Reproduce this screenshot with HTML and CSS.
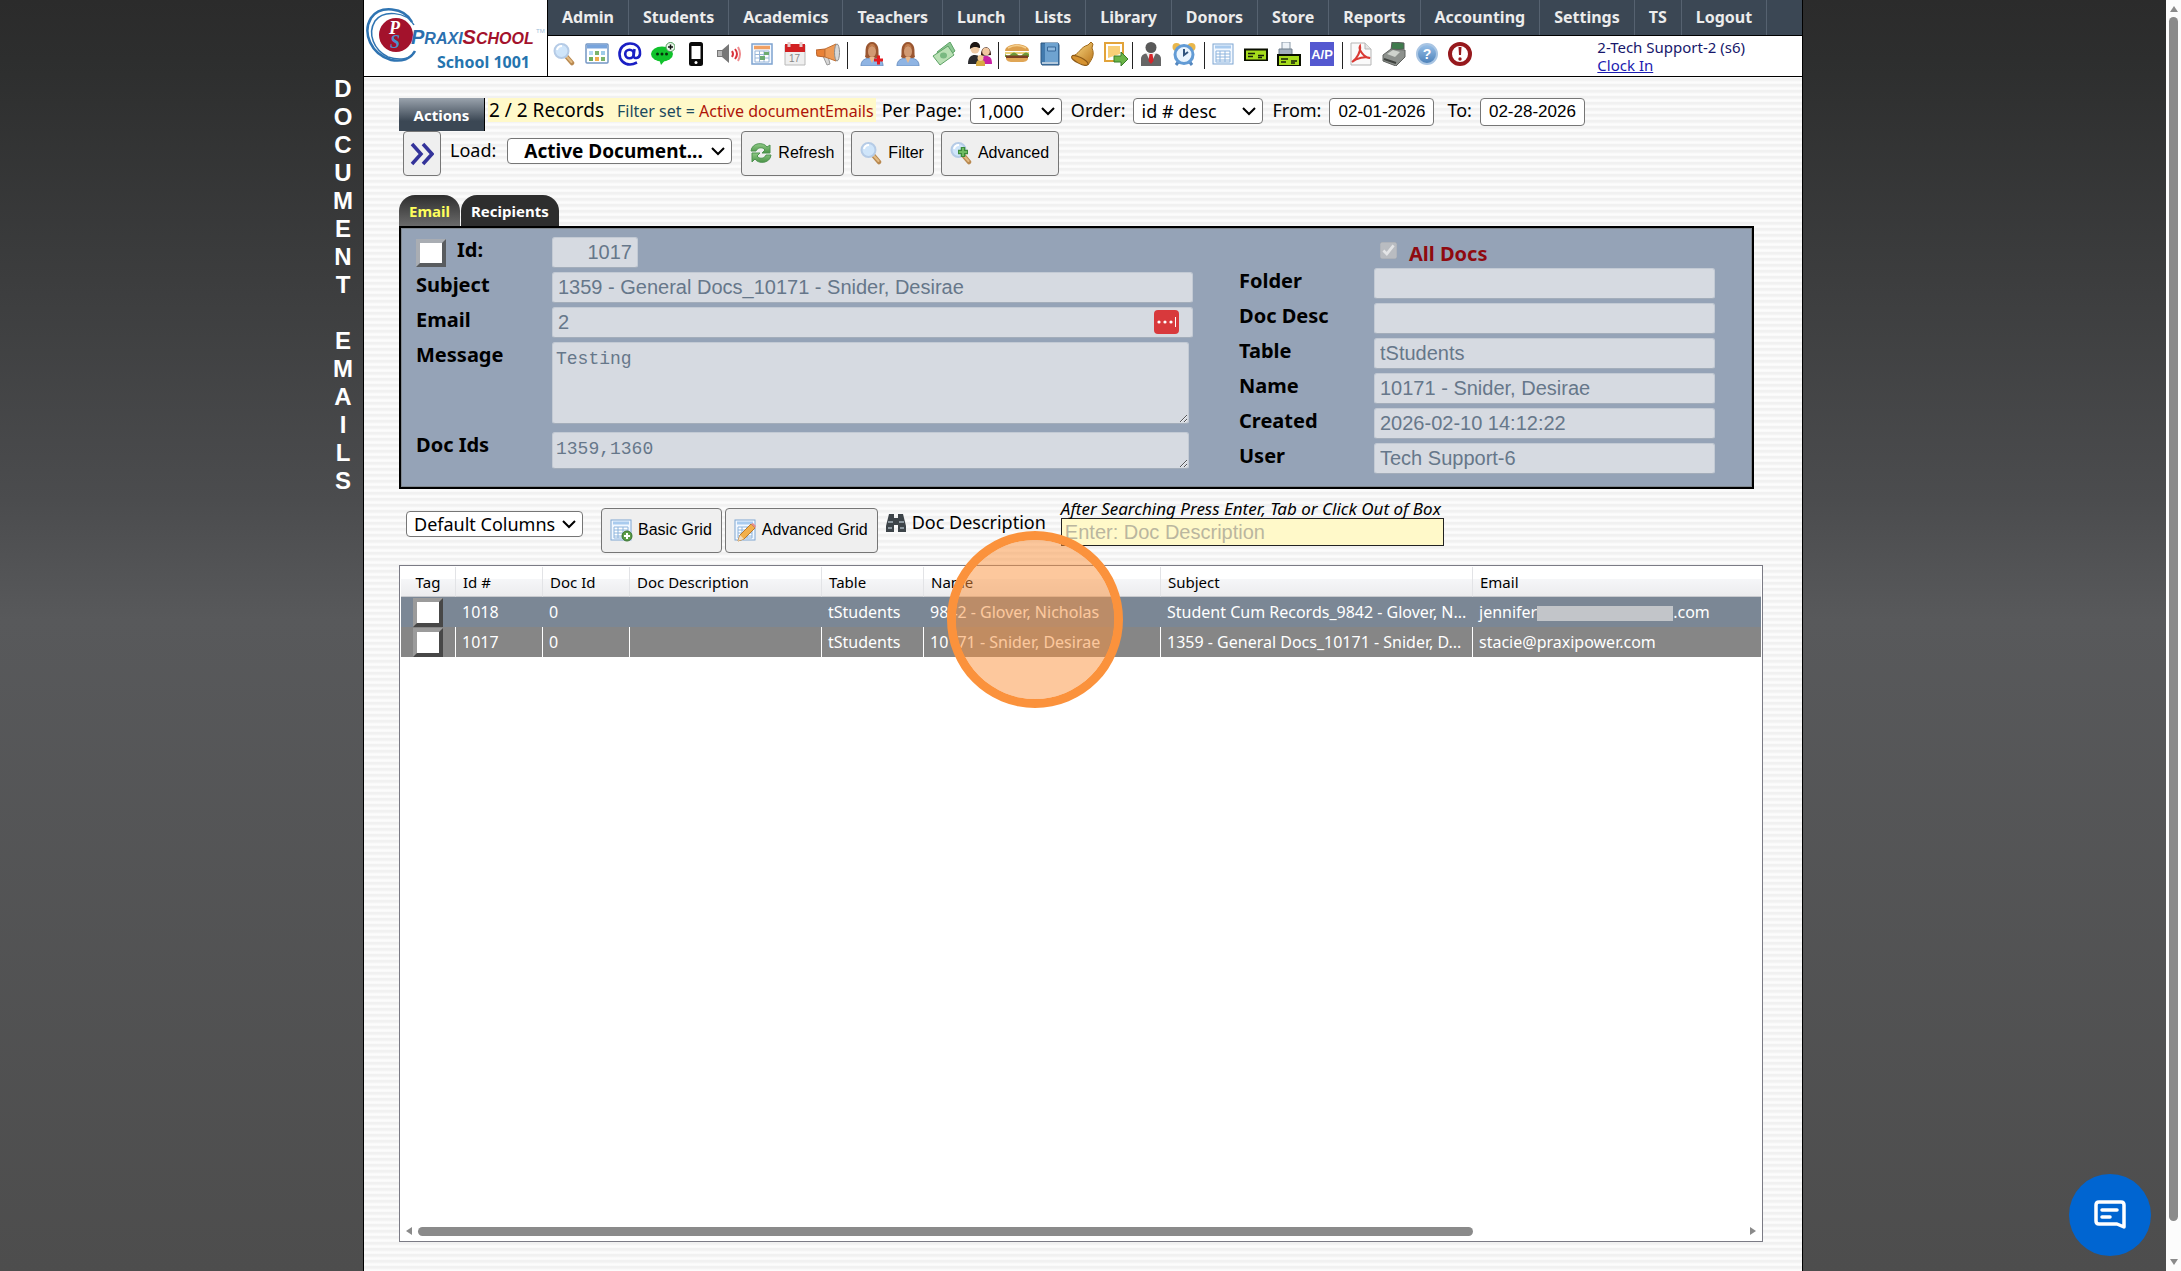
FILE: index.html
```html
<!DOCTYPE html>
<html lang="en">
<head>
<meta charset="utf-8">
<title>Document Emails - PraxiSchool</title>
<link rel="stylesheet" href="styles.css">
</head>
<body>
<svg class="defs" aria-hidden="true">
  <defs>
    <linearGradient id="gBlue" x1="0" y1="0" x2="0" y2="1"><stop offset="0" stop-color="#9cc3ea"/><stop offset="1" stop-color="#4a7fb8"/></linearGradient>
    <linearGradient id="gGold" x1="0" y1="0" x2="1" y2="1"><stop offset="0" stop-color="#ffe08a"/><stop offset="1" stop-color="#b9741a"/></linearGradient>
    <linearGradient id="gGreen" x1="0" y1="0" x2="0" y2="1"><stop offset="0" stop-color="#8fca86"/><stop offset="1" stop-color="#4b9447"/></linearGradient>
    <symbol id="mag" viewBox="0 0 24 24"><path d="M14 14l6 7" stroke="#b98950" stroke-width="4.500" stroke-linecap="round"/><path d="M15 15l4.500 5" stroke="#e3bb83" stroke-width="2" stroke-linecap="round"/><circle cx="9.500" cy="9" r="7" fill="#cfe5fa" stroke="#b5cbe6" stroke-width="2"/><path d="M5 8a5 5 0 0 1 5-4" stroke="#fff" stroke-width="2" fill="none"/></symbol>
    <symbol id="sheet" viewBox="0 0 24 24"><rect x="2" y="2" width="20" height="20" fill="#f2f8ff" stroke="#7ea6d2"/><path d="M4 5h16" stroke="#a9cbee" stroke-width="3"/><path d="M5 9h14v11H5zM5 12h14M5 15h14M5 18h14M9 9v11M14 9v11" fill="#fff" stroke="#8db4dd"/></symbol>
    <symbol id="woman" viewBox="0 0 24 24"><path d="M1 24c0-6 4-8 11-8s11 2 11 8z" fill="#8fb4e3" stroke="#6f94c4"/><path d="M9 15h6l-3 6z" fill="#e9b98d"/><path d="M5 15C6 12 5 9 6 5c1-3 3-5 6-5s5 2 6 5c1 4 0 7 1 10-3 2-4 1-5 0h-4c-1 1-2 2-5 0z" fill="#9a5630"/><ellipse cx="12" cy="9.500" rx="4" ry="5.500" fill="#d29a72"/><path d="M8 7c1-2 3-3 4-3s3 1 4 3c-1-4-2-5-4-5S9 3 8 7z" fill="#c27b4a"/></symbol>
    <symbol id="chequeIcon" viewBox="0 0 24 12"><rect x="1" y="1" width="22" height="11" fill="#a6dc1c" stroke="#0a0f00" stroke-width="2"/><path d="M4 5h7M4 8h5M14 7h6M14 9h4" stroke="#17220a" stroke-width="1.500"/></symbol>
  </defs>
</svg>

<div class="app">
  <aside class="side"><h1>D<br>O<br>C<br>U<br>M<br>E<br>N<br>T<br><br>E<br>M<br>A<br>I<br>L<br>S</h1></aside>

  <main class="page">
    <header class="header">
      <div class="brand">
        <svg class="logo" width="180" height="56" viewBox="0 0 180 56" role="img" aria-label="PraxiSchool">
          <g fill="none" stroke="#2f74b2"><path d="M46 14C38-1 14-3 5 10c-9 15 0 36 20 42 11 2 20-1 24-9" stroke-width="2.500"/><path d="M48 17C40 3 17 2 9 13c-8 13-1 29 13 36 12 4 22 2 26-5" stroke-width="1.500"/></g>
          <circle cx="30" cy="27" r="17" fill="#a3122c"/>
          <text x="23" y="26" class="mono-p">P</text><text x="24" y="40" class="mono-s">S</text>
          <text x="45" y="36" class="word"><tspan fill="#2b6fae" font-size="20">P</tspan><tspan fill="#2b6fae" font-size="16">RAXI</tspan><tspan fill="#a3122c" font-size="20">S</tspan><tspan fill="#a3122c" font-size="16">CHOOL</tspan></text>
          <text x="170" y="25" class="tm">TM</text>
        </svg>
        <span class="school">School 1001</span>
      </div>
      <div class="header-main">
        <nav class="nav">
          <a href="#">Admin</a><a href="#">Students</a><a href="#">Academics</a><a href="#">Teachers</a><a href="#">Lunch</a><a href="#">Lists</a><a href="#">Library</a><a href="#">Donors</a><a href="#">Store</a><a href="#">Reports</a><a href="#">Accounting</a><a href="#">Settings</a><a href="#">TS</a><a href="#">Logout</a>
        </nav>
        <div class="tools">
          <div class="group g1">
            <svg><use href="#mag"/></svg>
            <svg viewBox="0 0 24 24"><rect x="1" y="2" width="22" height="19" rx="1" fill="#fff" stroke="#7396c4" stroke-width="1.500"/><path d="M2 4.500h20" stroke="#78a4dc" stroke-width="4"/><path d="M4 9h4v4H4z" fill="#b5d8f5"/><path d="M10 9h4v4h-4zM16 15h4v4h-4z" fill="#7cb36b"/><path d="M16 9h4v4h-4z" fill="#9ecbe8"/><path d="M4 15h4v4H4z" fill="#6fae5c"/><path d="M10 15h4v4h-4z" fill="#f1ac4e"/></svg>
            <svg viewBox="0 0 24 24"><g fill="none" stroke="#1a1fc4" stroke-width="2.600"><circle cx="11.500" cy="12" r="4.300"/><path d="M16.500 7l-1 7c0 3 6 3 6.500-2C22.500 5 18 1.500 12 1.500S1.500 6 1.500 12 6 22.500 12 22.500c3 0 5-1 7-2"/></g></svg>
            <svg viewBox="0 0 24 24"><ellipse cx="11" cy="12" rx="11" ry="7.500" fill="#10c22b"/><path d="M8 17l2 6 6-7z" fill="#10c22b"/><g fill="#05300b"><circle cx="6.500" cy="12" r="1.500"/><circle cx="11" cy="12" r="1.500"/><circle cx="15.500" cy="12" r="1.500"/></g><circle cx="19.500" cy="5" r="4.500" fill="#e9f7ea" stroke="#4c9958"/><path d="M17 5h5M19.500 2.500v5" stroke="#111" stroke-width="1.500"/></svg>
            <svg viewBox="0 0 24 24"><rect x="5" y="0" width="14" height="24" rx="2.500" fill="#0a0a0a"/><path d="M7.500 4h9v13h-9z" fill="#fff"/><circle cx="12" cy="20.500" r="1.500" fill="#fff"/></svg>
            <svg viewBox="0 0 24 24"><path d="M0 8h5l7-6v19l-7-6H0z" fill="#777"/><path d="M1 9h4v5H1z" fill="#b5b5b5"/><g fill="none" stroke="#d9333c" stroke-width="2"><path d="M15 9q2 3 0 6" /><path d="M18 7q4 5 0 10"/><path d="M21 5q4 7 0 14" stroke="#ef8d90"/></g></svg>
            <svg viewBox="0 0 24 24"><rect x="2" y="2" width="20" height="20" fill="#f3f8ff" stroke="#7ea3cf" stroke-width="1.500"/><path d="M4 5.500h16" stroke="#f0a063" stroke-width="3.500"/><path d="M5 9h14v11H5zM5 12.500h14M5 16h14M9.500 9v11M14 9v11" fill="#fff" stroke="#9ab6d8"/><path d="M14 10h5v3h-5zM10 14h5v4h-5z" fill="#6dab72"/></svg>
            <svg viewBox="0 0 24 24"><path d="M2 3h20v20H2z" fill="#efefef" stroke="#b9b9b9"/><path d="M2 2h20v8H2z" fill="#d22022"/><path d="M6 0v5M18 0v5" stroke="#e7c9c9" stroke-width="3"/><text x="6" y="20" font-size="10" fill="#888" font-family="Liberation Sans, sans-serif">17</text></svg>
            <svg viewBox="0 0 24 24"><path d="M7 14l4 9 3-1-2-8z" fill="#d7d7d7" stroke="#999"/><path d="M0 8l9-1v8l-8-1z" fill="#e98136" stroke="#b8622a"/><path d="M9 7l11-5v17L9 15z" fill="#ee9a55" stroke="#c07034"/><ellipse cx="21" cy="10.500" rx="2.500" ry="8.500" fill="#d8d8d8" stroke="#8d8d8d"/></svg>
          </div>
          <div class="group g2">
            <svg viewBox="0 0 24 24"><use href="#woman"/><path d="M14 18h9M18.500 13.500v9" stroke="#e51a1f" stroke-width="3"/></svg>
            <svg><use href="#woman"/></svg>
            <svg viewBox="0 0 24 24"><g stroke="#5da266"><path d="M5 10L18 0l5 9-12 10z" fill="#8cc792"/><path d="M1 14L16 4l6 9L8 23z" fill="#b9e0b4"/></g><ellipse cx="11.500" cy="13.500" rx="3.500" ry="3" fill="#79b981"/></svg>
            <svg viewBox="0 0 24 24"><path d="M0 22c0-7 3-9 7-9s6 3 7 9z" fill="#2c2c2f"/><circle cx="7" cy="7" r="4.500" fill="#f0cba5"/><path d="M2 7c-1-9 11-9 10-1-4-1-6-2-10 1z" fill="#1d1613"/><path d="M12 22c0-6 2-8 6-8s6 2 6 8z" fill="#c822a3"/><path d="M13 14c-1-11 10-12 10-1z" fill="#3a1d14"/><circle cx="18" cy="9.500" r="3.800" fill="#f1c79f"/><path d="M8 24c0-5 1-6 5-6s4 2 4 6z" fill="#d7ab43"/><circle cx="12.500" cy="16" r="3" fill="#f3c993"/></svg>
          </div>
          <div class="group g3">
            <svg viewBox="0 0 24 24"><path d="M0 9c0-9 24-9 24 0z" fill="#dc9f4d"/><path d="M3 6q9-5 18 0" stroke="#f5cf8c" stroke-width="1.500" fill="none"/><path d="M0 10h24v2H0z" fill="#e9d27a"/><path d="M0 12q3 3 6 0t6 0 6 0 6 0v3H0z" fill="#6d9a37"/><path d="M1 13.500h22v3H1z" fill="#7a4022"/><path d="M1 16h22c0 3-3 4-6 4H7c-3 0-6-1-6-4z" fill="#e0a655"/></svg>
            <svg viewBox="0 0 24 24"><path d="M3 1h17l1 2v20H4l-1-2z" fill="#427aad" stroke="#2c5680"/><path d="M7 1h13v19H7z" fill="#6fa3d0"/><path d="M9.500 5h8v4h-8z" fill="#8fb9de" stroke="#39699a"/><path d="M4 21h16" stroke="#dce6ee" stroke-width="1.500"/></svg>
            <svg viewBox="0 0 24 24"><path d="M1 14C8 13 9 5 17 3l3-3 2 2-1 4c3 7 0 11-4 17C14 20 4 18 1 14z" fill="url(#gGold)" stroke="#a16a1a"/><ellipse cx="9" cy="18.500" rx="9" ry="3" transform="rotate(27 9 18)" fill="#d69331" stroke="#8d5a18"/></svg>
            <svg viewBox="0 0 24 24"><path d="M1 1h18v18H1z" fill="#fff" stroke="#e2a339" stroke-width="2"/><path d="M4 4h12v8L4 16z" fill="#f8cf77"/><path d="M10 14h7v-4l7 7-7 7v-4h-7z" fill="#6bb548" stroke="#387c28"/></svg>
          </div>
          <div class="group g4">
            <svg viewBox="0 0 24 24"><circle cx="12" cy="5.500" r="5.500" fill="#595959"/><path d="M2 24V17c0-4 3-6 10-6s10 2 10 6v7z" fill="#666"/><path d="M7 11l5 10 5-10z" fill="#eee"/><path d="M10.500 12h3l1 7-2.500 3-2.500-3z" fill="#d7252a"/></svg>
            <svg viewBox="0 0 24 24"><circle cx="4.500" cy="5" r="4" fill="#e9b74b"/><circle cx="19.500" cy="5" r="4" fill="#e9b74b"/><path d="M4 23l3-4M20 23l-3-4" stroke="#5587be" stroke-width="3"/><circle cx="12" cy="12.500" r="9" fill="#eaf4fd" stroke="#629bd5" stroke-width="3"/><path d="M12 7v6l4-3" fill="none" stroke="#33557d" stroke-width="2"/></svg>
          </div>
          <div class="group g5">
            <svg><use href="#sheet"/></svg>
            <svg viewBox="0 0 24 24"><use href="#chequeIcon" y="6" width="24" height="13"/></svg>
            <svg viewBox="0 0 24 24"><path d="M5 0h8v8H5z" fill="#eef3f8" stroke="#8a99a8"/><path d="M2 7h13v7H2z" fill="#a2b0bd" stroke="#6f7d8b"/><use href="#chequeIcon" y="12" width="24" height="12"/></svg>
            <svg viewBox="0 0 24 24"><path d="M0 0h24v24H0z" fill="#5458d0"/><text x="12" y="17" text-anchor="middle" font-size="13" font-weight="bold" fill="#fff" font-family="Liberation Sans, sans-serif">A/P</text></svg>
          </div>
          <div class="group g6">
            <svg viewBox="0 0 24 24"><path d="M2 1h14l6 6v16H2z" fill="#fafafa" stroke="#b5b5b5"/><path d="M16 1v6h6" fill="#e5e5e5" stroke="#b5b5b5"/><path d="M3 20C8 17 12 9 11 4c-2 3 4 12 10 12-5-2-13 0-18 4z" fill="none" stroke="#d93a34" stroke-width="2"/></svg>
            <svg viewBox="0 0 24 24"><path d="M10 0l12 1v6l-13 1z" fill="#3f7b4d" stroke="#5a5a5a"/><path d="M1 13L9 7l14 1v7l-9 9-13-5z" fill="#8d918d" stroke="#5f625f"/><path d="M5 12l6-4 7 2-5 5z" fill="#cfd3cd"/><path d="M2 17l12 4" stroke="#3e423e" stroke-width="2"/></svg>
            <svg viewBox="0 0 24 24"><circle cx="12" cy="12" r="10" fill="url(#gBlue)" stroke="#a9c5e3" stroke-width="2"/><text x="12" y="17" text-anchor="middle" font-size="14" font-weight="bold" fill="#fff" font-family="Liberation Sans, sans-serif">?</text></svg>
            <svg viewBox="0 0 24 24"><circle cx="12" cy="12" r="10" fill="#fff" stroke="#97191d" stroke-width="4"/><path d="M10.500 5h3l-.5 8h-2z" fill="#97191d"/><circle cx="12" cy="17" r="1.700" fill="#97191d"/></svg>
          </div>
          <div class="user"><span>2-Tech Support-2 (s6)</span><a href="#">Clock In</a></div>
        </div>
      </div>
    </header>

    <div class="content">
      <form class="bar top">
        <button type="button" class="actions">Actions</button>
        <p class="records">2 / 2 Records <small>Filter set = <em>Active documentEmails</em></small></p>
        <label>Per Page:<select class="s-page"><option>1,000</option></select></label>
        <label>Order:<select class="s-order"><option>id # desc</option></select></label>
        <label>From:<input class="date" type="text" value="02-01-2026"></label>
        <label class="to">To:<input class="date" type="text" value="02-28-2026"></label>
      </form>
      <div class="bar load">
        <button type="button" class="btn go" aria-label="Expand"><svg viewBox="0 0 24 24"><path d="M2 2l9 10-9 10M13 2l9 10-9 10" fill="none" stroke="#34339a" stroke-width="3.500"/></svg></button>
        <label>Load:<select class="s-load"><option>Active Document...</option></select></label>
        <button type="button" class="btn"><svg viewBox="0 0 24 24"><path d="M2 10c1-9 13-9 16-4l3-2v8h-8l3-3c-3-4-8-2-9 1z" fill="url(#gGreen)" stroke="#4f9351"/><path d="M22 14c-1 9-13 9-16 4l-3 3v-9h8l-3 3c3 4 8 2 9-1z" fill="url(#gGreen)" stroke="#4f9351"/></svg>Refresh</button>
        <button type="button" class="btn"><svg><use href="#mag"/></svg>Filter</button>
        <button type="button" class="btn"><svg viewBox="0 0 24 24"><use href="#mag"/><path d="M9 11h10M14 6v10" stroke="#3c8b3a" stroke-width="4.500"/><path d="M10 11h8M14 7v8" stroke="#6fbb62" stroke-width="2"/></svg>Advanced</button>
      </div>

      <div class="tabs"><button type="button" class="tab on">Email</button><button type="button" class="tab">Recipients</button></div>
      <section class="panel">
        <div class="fields left">
          <div class="lab"><input type="checkbox" class="bevel" id="idtick"><label for="idtick">Id:</label></div><input class="short" type="text" value="1017" aria-label="Id" disabled>
          <label for="subject">Subject</label><input id="subject" type="text" value="1359 - General Docs_10171 - Snider, Desirae" disabled>
          <label for="email">Email</label><div class="wrap"><input id="email" type="text" value="2" disabled><svg class="pass" viewBox="0 0 25 24"><rect width="25" height="24" rx="4" fill="#d8393c"/><circle cx="5" cy="12" r="1.600" fill="#fff"/><circle cx="11" cy="12" r="1.600" fill="#fff"/><circle cx="17" cy="12" r="1.600" fill="#fff"/><path d="M21.500 7v10" stroke="#fff"/></svg></div>
          <label for="message">Message</label><textarea id="message" class="tall" disabled>Testing</textarea>
          <label for="docids">Doc Ids</label><textarea id="docids" class="low" disabled>1359,1360</textarea>
        </div>
        <div class="fields right">
          <span></span><label class="all"><input type="checkbox" checked disabled>All Docs</label>
          <label for="folder">Folder</label><input id="folder" type="text" disabled>
          <label for="desc">Doc Desc</label><input id="desc" type="text" disabled>
          <label for="tbl">Table</label><input id="tbl" type="text" value="tStudents" disabled>
          <label for="name">Name</label><input id="name" type="text" value="10171 - Snider, Desirae" disabled>
          <label for="created">Created</label><input id="created" type="text" value="2026-02-10 14:12:22" disabled>
          <label for="user">User</label><input id="user" type="text" value="Tech Support-6" disabled>
        </div>
      </section>

      <div class="bar gridbar">
        <select class="s-cols" aria-label="Columns"><option>Default Columns</option></select>
        <button type="button" class="btn"><svg viewBox="0 0 24 24"><use href="#sheet"/><circle cx="18" cy="18" r="5" fill="#5b9d47" stroke="#3a7430"/><path d="M15 18h6M18 15v6" stroke="#fff" stroke-width="2"/></svg>Basic Grid</button>
        <button type="button" class="btn"><svg viewBox="0 0 24 24"><use href="#sheet"/><path d="M5 23l2-6L18 6l4 4-11 11z" fill="#f2b04c" stroke="#b9792a"/><path d="M5 23l2-6 4 4z" fill="#f3dcbc"/><path d="M18 6l4 4 1-2-3-3z" fill="#e58d8d"/></svg>Advanced Grid</button>
        <label class="find" for="docsearch"><svg viewBox="0 0 22 20"><path d="M4 1h5v4h4V1h5l2 8 1 4v6h-8v-7h-4v7H1v-6l1-4z" fill="#3d4449"/><path d="M3 9h5M14 9h5M3 15h4M15 15h4" stroke="#8b969e" stroke-width="2"/></svg>Doc Description</label>
        <div class="search"><i>After Searching Press Enter, Tab or Click Out of Box</i><input id="docsearch" type="text" placeholder="Enter: Doc Description"></div>
      </div>

      <section class="grid">
        <table>
          <colgroup><col class="c1"><col class="c2"><col class="c2"><col class="c4"><col class="c5"><col class="c6"><col class="c7"><col></colgroup>
          <thead><tr><th>Tag</th><th>Id #</th><th>Doc Id</th><th>Doc Description</th><th>Table</th><th>Name</th><th>Subject</th><th>Email</th></tr></thead>
          <tbody>
            <tr class="hot"><td><input type="checkbox" class="bevel" aria-label="Tag 1018"></td><td>1018</td><td>0</td><td></td><td>tStudents</td><td>9842 - Glover, Nicholas</td><td>Student Cum Records_9842 - Glover, N...</td><td>jennifer<span class="hidden"></span>.com</td></tr>
            <tr><td><input type="checkbox" class="bevel" aria-label="Tag 1017"></td><td>1017</td><td>0</td><td></td><td>tStudents</td><td>10171 - Snider, Desirae</td><td>1359 - General Docs_10171 - Snider, D...</td><td>stacie@praxipower.com</td></tr>
          </tbody>
        </table>
        <div class="hscroll"><svg viewBox="0 0 8 10"><path d="M7 1v8L1 5z"/></svg><span></span><svg viewBox="0 0 8 10"><path d="M1 1v8l6-4z"/></svg></div>
      </section>
    </div>
    <div class="pointer"></div>
  </main>
  <div></div>
</div>

<div class="vscroll"><svg viewBox="0 0 10 8"><path d="M1 7h8L5 1z"/></svg><span></span><svg viewBox="0 0 10 8"><path d="M1 1h8L5 7z"/></svg></div>

<button type="button" class="chat" aria-label="Chat"><svg viewBox="0 0 34 32" fill="none" stroke="#fff" stroke-width="3.500" stroke-linejoin="round" stroke-linecap="round"><path d="M6 3h22q3 0 3 3v22l-7-3H6q-3 0-3-3V6q0-3 3-3z"/><path d="M9 11h15M9 18h8"/></svg></button>
</body>
</html>
```
FILE: styles.css
```css
* { box-sizing: border-box; }

body {
  margin: 0;
  min-height: 100vh;
  display: flex;
  font-family: "Noto Sans", "Liberation Sans", sans-serif;
  font-size: 19px;
  color: #000;
  background: linear-gradient(#2b2b2b 0, #2d2e2e 60px, #4b4c4e 500px, #58595b 620px, #4d4d4d 1271px);
}

button, input, select, textarea { font: inherit; margin: 0; }
.defs { position: absolute; width: 0; height: 0; }

.app {
  flex: 1;
  display: grid;
  grid-template-columns: 1fr minmax(0, 1440px) 1fr;
}

.side { display: flex; justify-content: flex-end; }
.side h1 {
  width: 24px;
  margin: 75px 8px 0 0;
  font: bold 24px/28px "Liberation Sans", sans-serif;
  text-align: center;
  color: #fff;
}

.page {
  position: relative;
  display: flex;
  flex-direction: column;
  border: 1px solid #000;
  border-width: 0 1px;
  background: repeating-linear-gradient(#f1f1f1 0, #f1f1f1 2px, #f7f7f7 3px, #fcfcfc 4px, #fcfcfc 5px, #f7f7f7 6px);
}

/* header */
.header { display: flex; height: 77px; border-bottom: 1px solid #000; background: #fff; }
.brand { display: flex; flex-direction: column; width: 184px; padding: 8px 0 0 2px; border-right: 1px solid #000; }
.logo { display: block; }
.logo .word { font: italic bold 15px "Liberation Sans", sans-serif; }
.logo .mono-p { font: italic bold 18px "Liberation Serif", serif; fill: #fff; }
.logo .mono-s { font: italic bold 18px "Liberation Serif", serif; fill: #4a8fcc; }
.logo .tm { font: 6px "Liberation Sans", sans-serif; fill: #9dbbd8; }
.school { margin: -13px 17px 0 0; font-size: 16px; font-weight: bold; line-height: 22px; text-align: right; color: #2574ae; }
.header-main { flex: 1; min-width: 0; }
.nav { display: flex; height: 36px; background: #3b4754; border-bottom: 1px solid #000; }
.nav a { padding: 0 14px; border-right: 1px solid #566270; font-size: 16px; font-weight: bold; line-height: 35px; color: #ececec; text-decoration: none; }
.tools { display: flex; align-items: flex-start; padding: 6px 0 0 4px; }
.tools svg { width: 24px; height: 24px; display: block; }
.group { display: flex; gap: 9px; height: 27px; padding: 0 7px 0 0; border-right: 1px solid #222; }
.g2 { gap: 12px; padding: 0 6px 0 12px; }
.g3 { padding: 0 4px 0 6px; }
.g4 { padding: 0 8px 0 6px; }
.g5 { padding: 0 8px 0 6px; }
.g6 { padding: 0 0 0 6px; border: 0; }
.user { display: flex; flex-direction: column; margin: -4px 57px 0 auto; font-size: 15px; line-height: 18px; color: #17176b; }
.user a { color: #1a1ab0; }

/* record and filter bars */
.content { flex: 1; display: flex; flex-direction: column; padding: 21px 39px 29px 35px; }
.bar { display: flex; align-items: flex-start; line-height: 24px; white-space: nowrap; }
.bar label { display: flex; gap: 8px; font-size: 18px; }
.actions {
  width: 86px; height: 33px; margin-right: 3px; padding: 0;
  border: 0; border-right: 1px solid #000;
  background: linear-gradient(#9aa3ad, #3b4754 70%);
  color: #fff; font-size: 15px; font-weight: bold;
}
.records { height: 24px; margin: 0 6px 0 0; padding: 0 2px 0 1px; background: #fff9c9; }
.records small { margin-left: 8px; font-size: 16px; color: #1c4a5e; }
.records em { font-style: normal; color: #ae1408; }
.top label { margin-right: 9px; }
.top .to { margin-left: 4px; }

select {
  appearance: none;
  height: 26px;
  padding: 0 22px 0 7px;
  border: 1px solid #767676;
  border-radius: 4px;
  line-height: 24px;
  color: #000;
  background: #fff url("data:image/svg+xml,%3Csvg xmlns='http://www.w3.org/2000/svg' width='14' height='9'%3E%3Cpath d='M1 1l6 6 6-6' fill='none' stroke='%23000' stroke-width='2'/%3E%3C/svg%3E") no-repeat right 6px center;
}
.s-page { width: 92px; }
.s-order { width: 130px; }
.s-load { width: 225px; padding-left: 16px; font-size: 19px; font-weight: bold; }
.s-cols { width: 177px; margin: 3px 15px 0 0; font-size: 18px; }
.date { width: 105px; height: 28px; padding: 0; border: 1px solid #767676; border-radius: 4px; background: #fff; font: 17px "Liberation Sans", sans-serif; text-align: center; }

.load { padding-left: 4px; gap: 7px; }
.load label { margin: 7px 2px 0; }
.bar.load label { gap: 11px; }
.btn {
  display: flex; align-items: center; gap: 5px;
  height: 45px; padding: 0 9px 2px 7px;
  border: 1px solid #767676; border-radius: 4px;
  background: #efefef;
  font: 16px "Liberation Sans", sans-serif;
  color: #000; white-space: nowrap;
}
.btn svg { width: 24px; height: 24px; }
.btn.go { padding: 0 6px; }

/* tabs and record panel */
.tabs { display: flex; gap: 1px; margin-top: 19px; }
.tab { height: 31px; padding: 0 10px; border: 0; border-radius: 16px 16px 0 0; background: #2e2e2e; color: #fff; font-size: 15px; font-weight: bold; }
.tab.on { background: linear-gradient(#2e2e2e, #6a6a6a); color: #ffff5c; }

.panel {
  display: flex; justify-content: space-between;
  margin-right: 9px;
  padding: 5px 37px 13px 15px;
  border: 2px solid #000;
  box-shadow: inset 0 0 0 1px #808890;
  background: #95a3b7;
}
.fields { display: grid; row-gap: 4px; align-content: start; align-items: start; font-size: 20px; line-height: 25px; }
.fields label { font-weight: bold; }
.left { grid-template-columns: 136px 641px; padding-top: 4px; }
.right { grid-template-columns: 135px 341px; }
.lab { display: flex; gap: 11px; }
.fields input[type="text"], .fields textarea {
  display: block; width: 100%; height: 31px; padding: 0 5px;
  border: 1px solid #c3cad4; border-bottom-color: #a3adba; border-radius: 3px;
  background: #d6dae1; color: #66778a;
  font: 20px "Liberation Sans", sans-serif;
}
.fields input.short { width: 86px; text-align: right; }
.fields textarea { width: 637px; padding: 4px 3px; font: 18px/24px "Liberation Mono", monospace; }
.fields textarea.tall { height: 82px; margin-bottom: 4px; }
.fields textarea.low { height: 37px; }
.wrap { position: relative; }
.pass { position: absolute; right: 14px; top: 3px; width: 25px; height: 24px; }
.all { display: flex; gap: 12px; height: 31px; padding: 8px 0 0 6px; color: #8f0a10; }
.all input { width: 17px; height: 17px; margin-top: 1px; }

.bevel { appearance: none; flex: none; width: 30px; height: 28px; margin-top: 2px; background: #fff; border: 4px outset #a9adb3; }

/* grid controls */
.gridbar { margin-top: 19px; padding-left: 7px; height: 57px; gap: 3px; }
.find { margin: 0 12px 0 4px; line-height: 28px; }
.bar .find { gap: 5px; }
.find svg { width: 22px; height: 20px; margin-top: 5px; }
.search { width: 383px; }
.search i { display: block; height: 10px; font-size: 17px; line-height: 2px; }
.search input { display: block; width: 100%; height: 28px; padding: 0 3px; border: 1px solid #222; background: #fff9c9; font: 20px "Liberation Sans", sans-serif; }
.search input::placeholder { color: #bab69f; }

/* data grid */
.grid { flex: 1; display: flex; flex-direction: column; justify-content: space-between; min-height: 300px; padding: 1px; border: 1px solid #7b7b85; background: #fff; }
table { width: 100%; border-collapse: separate; border-spacing: 0; table-layout: fixed; font-size: 16px; }
.c1 { width: 55px; } .c2 { width: 87px; } .c4 { width: 192px; } .c5 { width: 102px; } .c6 { width: 237px; } .c7 { width: 312px; }
th, td { height: 30px; padding: 0 0 0 6px; line-height: 28px; text-align: left; white-space: nowrap; overflow: hidden; }
th { padding-left: 7px; font-size: 15px; font-weight: normal; border-right: 1px solid #e2e3e6; border-bottom: 1px solid #c8cace; background: linear-gradient(#fff 40%, #f5f6f8 42%, #ececee); }
th:first-child { padding: 0; text-align: center; }
td { border-right: 1px solid #fff; background: #868686; color: #fff; }
.hot td { border-color: #7b8795; background: #7b8795; }
th:last-child, td:last-child { border-right: 0; }
td:first-child { padding: 0; text-align: center; }
td .bevel { display: block; width: 30px; height: 29px; margin: 0 auto; border-color: #9b9b9b; }
.hidden { display: inline-block; width: 136px; height: 15px; vertical-align: -3px; background: #c2c5c9; }

.hscroll { display: flex; align-items: center; gap: 5px; height: 18px; padding: 0 4px; }
.hscroll svg { width: 8px; height: 10px; fill: #8a8a8a; }
.hscroll span { flex: 0 1 1055px; height: 9px; border-radius: 5px; background: #8a8a8a; margin-right: auto; }

.vscroll { display: flex; flex-direction: column; align-items: center; width: 15px; height: 100vh; padding: 5px 0; background: #fcfcfc; }
.vscroll svg { width: 10px; height: 8px; fill: #8a8a8a; }
.vscroll span { flex: 1; width: 9px; margin: 4px 0 37px; border-radius: 5px; background: #8a8a8a; }

/* click marker and chat launcher float over the page */
.pointer { position: absolute; left: 583px; top: 531px; width: 176px; height: 177px; border: 9px solid #fb923c; border-radius: 50%; background: rgba(251, 146, 60, .5); background-clip: padding-box; }
.chat { position: fixed; right: 30px; bottom: 15px; width: 82px; height: 82px; padding: 24px; border: 0; border-radius: 50%; background: #0065d1; }
.chat svg { display: block; width: 34px; height: 32px; }
```
